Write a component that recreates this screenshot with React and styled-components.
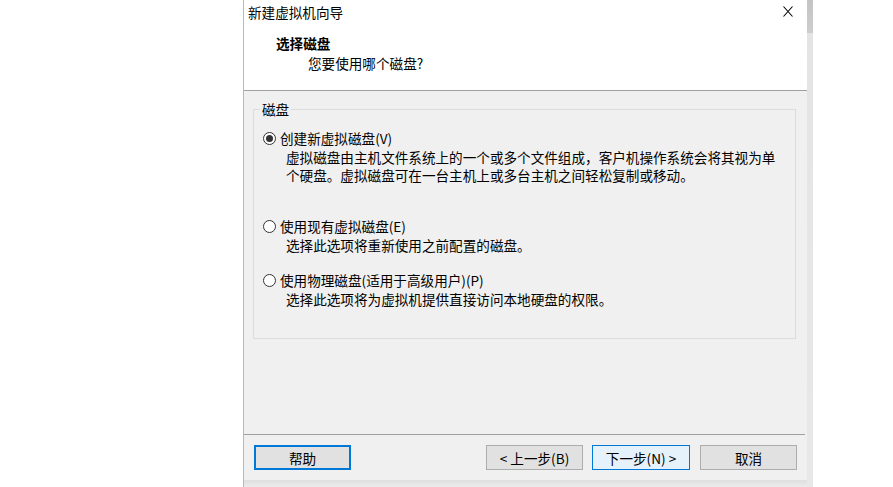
import React from 'react';
import styled, { createGlobalStyle } from 'styled-components';

const GlobalStyle = createGlobalStyle`
  html, body {
    margin: 0;
    padding: 0;
    background: #ffffff;
  }
  body {
    font-family: 'Noto Sans CJK SC', 'Noto Sans', sans-serif;
    font-size: 13.6px;
    color: #000;
  }
`;

const Page = styled.div`
  display: flex;
  height: 487px;
  padding-left: 243px;
  overflow: hidden;
`;

const Frame = styled.div`
  display: flex;
`;

const DialogColumn = styled.div`
  display: flex;
  flex-direction: column;
  border-left: 1px solid #b9b9b9;
`;

const Dialog = styled.div`
  width: 563px;
  height: 480px;
  display: flex;
  flex-direction: column;
  background: #f0f0f0;
`;

const BottomShadow = styled.div`
  flex: 1;
  background: linear-gradient(to bottom, #dedede, #ececec);
`;

const SideShadow = styled.div`
  width: 6px;
  background: linear-gradient(to bottom, #c4c4c4 0, #cdcdcd 33px, #e4e4e4 33px, #e8e8e8 100%);
`;

const Header = styled.div`
  height: 90px;
  background: #ffffff;
  border-bottom: 1px solid #a0a0a0;
`;

const TitleBar = styled.div`
  height: 23px;
  display: flex;
  align-items: center;
  justify-content: space-between;
  padding: 0 14px 0 4px;
`;

const Title = styled.span`
  line-height: 18px;
`;

const Close = styled.svg`
  display: block;
  width: 10px;
  height: 11px;
`;

const Heading = styled.div`
  margin: 11px 0 0 32px;
  font-weight: bold;
  line-height: 18px;
`;

const SubHeading = styled.div`
  margin: 2px 0 0 64px;
  line-height: 18px;
`;

const Body = styled.div`
  flex: 1;
  padding: 9px 11px 0 9px;
`;

const Group = styled.fieldset`
  margin: 0;
  height: 239px;
  box-sizing: border-box;
  padding: 0 8px 0 9px;
  border: 1px solid #dcdcdc;
`;

const Legend = styled.legend`
  margin-left: -3px;
  padding: 0 2px;
  line-height: 18px;
`;

const Option = styled.div`
  margin-top: ${p => p.$gap}px;
`;

const RadioLine = styled.label`
  display: flex;
  align-items: center;
  gap: 4px;
  line-height: 18px;
`;

const Radio = styled.span`
  width: 13px;
  height: 13px;
  box-sizing: border-box;
  border-radius: 50%;
  border: 1px solid #333;
  background: #fff;
  display: flex;
  align-items: center;
  justify-content: center;

  &::after {
    content: '';
    width: 7px;
    height: 7px;
    border-radius: 50%;
    background: ${p => (p.$checked ? '#333' : 'transparent')};
  }
`;

const Desc = styled.div`
  margin-top: 1px;
  padding-left: 23px;
  width: 500px;
`;

const DescLine = styled.div`
  height: 18px;
  line-height: 18px;
`;

const Separator = styled.div`
  height: 1px;
  margin-right: 2px;
  background: #a0a0a0;
`;

const Footer = styled.div`
  display: flex;
  align-items: center;
  padding: 10px;
`;

const Spacer = styled.div`
  flex: 1;
`;

const Button = styled.button`
  width: ${p => p.$w || 97}px;
  height: 25px;
  margin-left: ${p => p.$ml || 0}px;
  box-sizing: border-box;
  font-family: inherit;
  font-size: 13.6px;
  color: #000;
  padding: 0;
  background: ${p => (p.$hot ? '#e5f1fb' : '#e1e1e1')};
  border: ${p => (p.$focus ? '2px solid #0078d7' : p.$hot ? '1px solid #0078d7' : '1px solid #adadad')};
`;

const options = [
  {
    label: '创建新虚拟磁盘(V)',
    checked: true,
    gap: 11,
    desc: ['虚拟磁盘由主机文件系统上的一个或多个文件组成，客户机操作系统会将其视为单', '个硬盘。虚拟磁盘可在一台主机上或多台主机之间轻松复制或移动。'],
  },
  {
    label: '使用现有虚拟磁盘(E)',
    gap: 33,
    desc: ['选择此选项将重新使用之前配置的磁盘。'],
  },
  {
    label: '使用物理磁盘(适用于高级用户)(P)',
    gap: 17,
    desc: ['选择此选项将为虚拟机提供直接访问本地硬盘的权限。'],
  },
];

export default function App() {
  return (
    <>
      <GlobalStyle />
      <Page>
        <Frame>
          <DialogColumn>
            <Dialog>
              <Header>
                <TitleBar>
                  <Title>新建虚拟机向导</Title>
                  <Close viewBox="0 0 10 11">
                    <path d="M0.5 0.5 L9.5 10.5 M9.5 0.5 L0.5 10.5" stroke="#000" strokeWidth="1.1" fill="none" />
                  </Close>
                </TitleBar>
                <Heading>选择磁盘</Heading>
                <SubHeading>您要使用哪个磁盘?</SubHeading>
              </Header>
              <Body>
                <Group>
                  <Legend>磁盘</Legend>
                  {options.map(o => (
                    <Option key={o.label} $gap={o.gap}>
                      <RadioLine>
                        <Radio $checked={o.checked} />
                        {o.label}
                      </RadioLine>
                      <Desc>
                        {o.desc.map(d => (
                          <DescLine key={d}>{d}</DescLine>
                        ))}
                      </Desc>
                    </Option>
                  ))}
                </Group>
              </Body>
              <Separator />
              <Footer>
                <Button $focus>帮助</Button>
                <Spacer />
                <Button>&lt; 上一步(B)</Button>
                <Button $hot $ml={9} $w={98}>下一步(N) &gt;</Button>
                <Button $ml={10}>取消</Button>
              </Footer>
            </Dialog>
            <BottomShadow />
          </DialogColumn>
          <SideShadow />
        </Frame>
      </Page>
    </>
  );
}
